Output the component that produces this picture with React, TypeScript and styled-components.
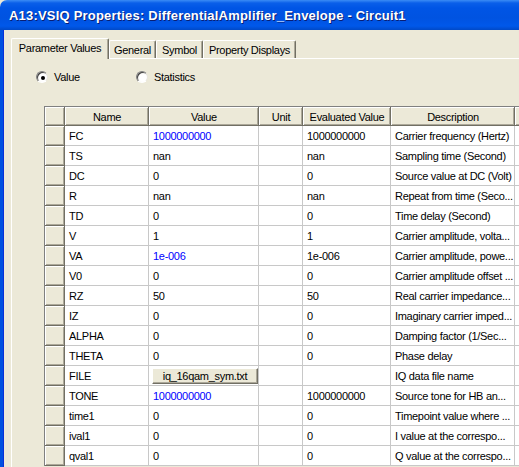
import React from 'react';
import styled, { createGlobalStyle } from 'styled-components';

const GlobalStyle = createGlobalStyle`
  html, body {
    margin: 0;
    padding: 0;
    background: #ece9d8;
    overflow: hidden;
  }
`;

const UI_FONT = `'Liberation Sans', Arial, sans-serif`;

const Window = styled.div`
  display: flex;
  flex-direction: column;
  width: 519px;
  height: 467px;
  overflow: hidden;
  background: #ece9d8;
  font-family: ${UI_FONT};
  font-size: 11px;
  letter-spacing: -0.3px;
  color: #000;
`;

const TitleBar = styled.div`
  display: flex;
  align-items: center;
  height: 30px;
  flex: none;
  padding-left: 9px;
  border-top-left-radius: 7px;
  background: linear-gradient(
    180deg,
    #3b8cf5 0px,
    #0a5fe9 3px,
    #0055e5 8px,
    #0053e1 18px,
    #0058ea 26px,
    #0049c7 30px
  );
  color: #fff;
  font-family: ${UI_FONT};
  font-weight: bold;
  font-size: 13px;
  letter-spacing: 0.2px;
  text-shadow: 1px 1px 0 #0a1e73;
  white-space: nowrap;
`;

const Frame = styled.div`
  display: flex;
  flex: 1;
  min-height: 0;
  border-left: 3px solid #0051e0;
  box-shadow: inset 1px 0 0 #0831d9;
`;

const Body = styled.div`
  flex: 1;
  display: flex;
  flex-direction: column;
  padding: 8px 0 0 8px;
  min-width: 0;
`;

const TabStrip = styled.div`
  display: flex;
  align-items: flex-end;
  height: 20px;
  flex: none;
`;

const Tab = styled.div<{ $active?: boolean; $w: number }>`
  box-sizing: border-box;
  width: ${(p) => p.$w}px;
  height: ${(p) => (p.$active ? 21 : 18)}px;
  margin-bottom: ${(p) => (p.$active ? -1 : 0)}px;
  display: flex;
  align-items: ${(p) => (p.$active ? 'flex-start' : 'center')};
  justify-content: center;
  padding-top: ${(p) => (p.$active ? 3 : 0)}px;
  background: #ece9d8;
  border-top: 1px solid #fff;
  border-left: 1px solid #fff;
  border-right: 1px solid #716f64;
  border-top-left-radius: 2px;
  border-top-right-radius: 2px;
  box-shadow: inset -1px 0 0 #aca899;
  position: relative;
  z-index: ${(p) => (p.$active ? 2 : 1)};
  white-space: nowrap;
`;

const Panel = styled.div`
  flex: 1;
  display: flex;
  flex-direction: column;
  border-top: 1px solid #fff;
  border-left: 1px solid #fff;
  padding-top: 10px;
  min-width: 0;
`;

const RadioRow = styled.div`
  display: flex;
  align-items: center;
  height: 16px;
  padding-left: 24px;
`;

const RadioOption = styled.label`
  display: flex;
  align-items: center;
  gap: 6px;
  width: 100px;
`;

const RadioCircle = styled.span<{ $checked?: boolean }>`
  box-sizing: border-box;
  width: 12px;
  height: 12px;
  border-radius: 50%;
  background: radial-gradient(circle at 60% 60%, #fff 40%, #e4e2da 100%);
  border: 1px solid;
  border-color: #808080 #e8e6de #fff #808080;
  box-shadow: inset 1px 1px 0 #404040;
  display: flex;
  align-items: center;
  justify-content: center;

  &::after {
    content: '';
    display: ${(p) => (p.$checked ? 'block' : 'none')};
    width: 4px;
    height: 4px;
    border-radius: 50%;
    background: #000;
    margin: 1px 0 0 1px;
  }
`;

const Grid = styled.div`
  display: grid;
  grid-template-columns: 20px 84px 110px 44px 88px 124px 80px;
  grid-auto-rows: 20px;
  grid-template-rows: 19px;
  margin: 21px 0 0 32px;
  border-top: 1px solid #808080;
  border-left: 1px solid #808080;
  background: #fff;
  width: max-content;
`;

const HeaderCell = styled.div`
  box-sizing: border-box;
  display: flex;
  align-items: center;
  justify-content: center;
  background: #ece9d8;
  box-shadow: inset -1px -1px 0 #716f64, inset 1px 1px 0 #fff,
    inset -2px -2px 0 #aca899;
  white-space: nowrap;
  overflow: hidden;
`;

const RowHead = styled.div`
  background: #ece9d8;
  box-shadow: inset -1px -1px 0 #716f64, inset 1px 1px 0 #fff,
    inset -2px -2px 0 #aca899;
`;

const Cell = styled.div<{ $blue?: boolean }>`
  box-sizing: border-box;
  display: flex;
  align-items: center;
  padding-left: 4px;
  border-right: 1px solid #c8c8c8;
  border-bottom: 1px solid #c8c8c8;
  color: ${(p) => (p.$blue ? '#0000ff' : '#000')};
  white-space: nowrap;
  overflow: hidden;
`;

const FileButton = styled.button`
  box-sizing: border-box;
  width: 106px;
  height: 16px;
  margin-left: -1px;
  padding: 0;
  font-family: ${UI_FONT};
  font-size: 11px;
  letter-spacing: -0.3px;
  color: #000;
  background: #ece9d8;
  border: 1px solid;
  border-color: #fff #716f64 #716f64 #fff;
  box-shadow: inset -1px -1px 0 #aca899;
`;

type Row = {
  name: string;
  value: string;
  blue?: boolean;
  evaluated: string;
  description: string;
  file?: boolean;
};

const rows: Row[] = [
  { name: 'FC', value: '1000000000', blue: true, evaluated: '1000000000', description: 'Carrier frequency (Hertz)' },
  { name: 'TS', value: 'nan', evaluated: 'nan', description: 'Sampling time (Second)' },
  { name: 'DC', value: '0', evaluated: '0', description: 'Source value at DC (Volt)' },
  { name: 'R', value: 'nan', evaluated: 'nan', description: 'Repeat from time (Seco...' },
  { name: 'TD', value: '0', evaluated: '0', description: 'Time delay (Second)' },
  { name: 'V', value: '1', evaluated: '1', description: 'Carrier amplitude, volta...' },
  { name: 'VA', value: '1e-006', blue: true, evaluated: '1e-006', description: 'Carrier amplitude, powe...' },
  { name: 'V0', value: '0', evaluated: '0', description: 'Carrier amplitude offset ...' },
  { name: 'RZ', value: '50', evaluated: '50', description: 'Real carrier impedance...' },
  { name: 'IZ', value: '0', evaluated: '0', description: 'Imaginary carrier imped...' },
  { name: 'ALPHA', value: '0', evaluated: '0', description: 'Damping factor (1/Sec...' },
  { name: 'THETA', value: '0', evaluated: '0', description: 'Phase delay' },
  { name: 'FILE', value: 'iq_16qam_sym.txt', file: true, evaluated: '', description: 'IQ data file name' },
  { name: 'TONE', value: '1000000000', blue: true, evaluated: '1000000000', description: 'Source tone for HB an...' },
  { name: 'time1', value: '0', evaluated: '0', description: 'Timepoint value where ...' },
  { name: 'ival1', value: '0', evaluated: '0', description: 'I value at the correspo...' },
  { name: 'qval1', value: '0', evaluated: '0', description: 'Q value at the correspo...' },
];

const tabs = [
  { label: 'Parameter Values', w: 98, active: true },
  { label: 'General', w: 47 },
  { label: 'Symbol', w: 47 },
  { label: 'Property Displays', w: 93 },
];

const App: React.FC = () => {
  return (
    <>
      <GlobalStyle />
      <Window>
        <TitleBar>A13:VSIQ Properties: DifferentialAmplifier_Envelope - Circuit1</TitleBar>
        <Frame>
          <Body>
            <TabStrip>
              {tabs.map((t) => (
                <Tab key={t.label} $active={t.active} $w={t.w}>
                  {t.label}
                </Tab>
              ))}
            </TabStrip>
            <Panel>
              <RadioRow>
                <RadioOption>
                  <RadioCircle $checked />
                  Value
                </RadioOption>
                <RadioOption>
                  <RadioCircle />
                  Statistics
                </RadioOption>
              </RadioRow>
              <Grid>
                <HeaderCell />
                <HeaderCell>Name</HeaderCell>
                <HeaderCell>Value</HeaderCell>
                <HeaderCell>Unit</HeaderCell>
                <HeaderCell>Evaluated Value</HeaderCell>
                <HeaderCell>Description</HeaderCell>
                <HeaderCell />
                {rows.map((r) => (
                  <React.Fragment key={r.name}>
                    <RowHead />
                    <Cell>{r.name}</Cell>
                    <Cell $blue={r.blue}>
                      {r.file ? <FileButton>{r.value}</FileButton> : r.value}
                    </Cell>
                    <Cell />
                    <Cell>{r.evaluated}</Cell>
                    <Cell>{r.description}</Cell>
                    <Cell />
                  </React.Fragment>
                ))}
              </Grid>
            </Panel>
          </Body>
        </Frame>
      </Window>
    </>
  );
};

export default App;
